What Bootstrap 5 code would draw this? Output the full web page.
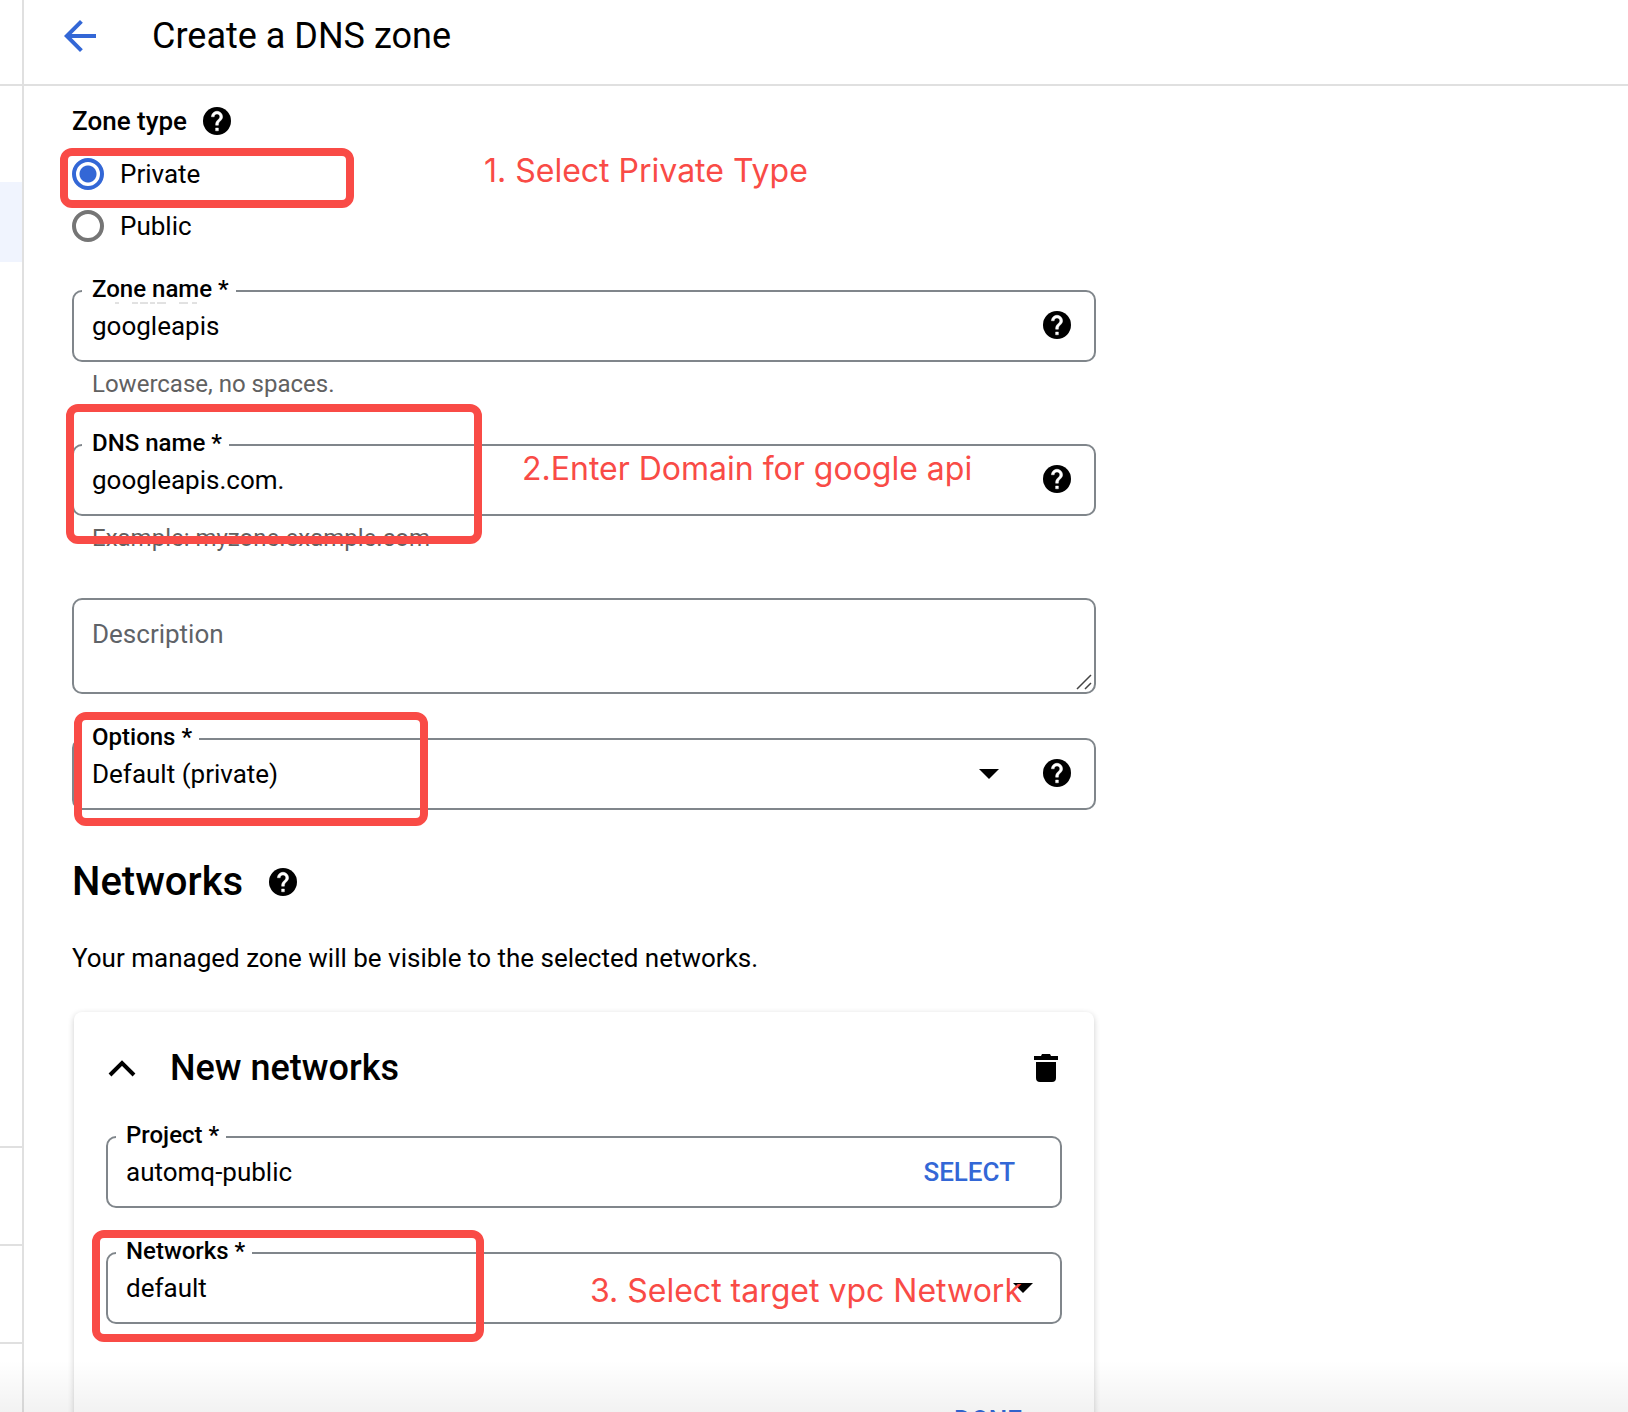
<!DOCTYPE html>
<html lang="en">
<head>
<meta charset="utf-8">
<meta name="viewport" content="width=device-width, initial-scale=1">
<title>Create a DNS zone</title>
<link href="https://cdn.jsdelivr.net/npm/bootstrap@5.3.0/dist/css/bootstrap.min.css" rel="stylesheet">
<style>
  body { font-family: Roboto, "Liberation Sans", sans-serif; font-size: 26px; line-height: 30px; color: #000; background: #fff; }
  .shell::after { content: ""; position: absolute; left: 0; right: 0; bottom: 0; height: 52px; pointer-events: none; background: linear-gradient(rgba(0,0,0,0), rgba(0,0,0,.05)); }
  .side-rail { width: 24px; border-right: 2px solid #e0e0e0; }
  .rail-head { height: 86px; border-bottom: 2px solid #e0e0e0; }
  .rail-active { height: 80px; margin-top: 96px; background: #f0f4fe; }
  .rail-item { height: 98px; border-top: 2px solid #e0e0e0; }
  .topbar { height: 86px; padding: 0 40px 12px; gap: 56px; border-bottom: 2px solid #e0e0e0; }
  .page-title { font-size: 36px; line-height: 42px; font-weight: 400; }
  .page-body { padding: 20px 48px 0; }
  .zone-form { max-width: 1024px; }
  .group-title { font-size: 26px; line-height: 30px; font-weight: 500; }
  .type-list { margin-top: 22px; gap: 20px; }
  .type-item { height: 32px; gap: 16px; }
  .type-item input { appearance: none; width: 32px; height: 32px; margin: 0; border: 4px solid #757575; border-radius: 50%; background: #fff; }
  .type-item input:checked { border-color: #3367d6; background: radial-gradient(circle, #3367d6 8px, #fff 9px); }
  .outlined { position: relative; height: 72px; padding: 0 23px 0 18px; border: 2px solid #80868b; border-radius: 10px; }
  .outlined.tall { height: 96px; padding: 0; }
  .outlined > label { position: absolute; left: 8px; top: -17px; padding: 0 7px 0 10px; font-size: 24px; line-height: 28px; font-weight: 500; background: #fff; }
  .outlined input, .outlined select, .outlined textarea { flex: 1 1 0; min-width: 0; padding: 0; border: 0; outline: 0; background: transparent; color: #000; appearance: none; line-height: 30px; }
  .outlined textarea { width: 100%; height: 92px; padding: 19px 18px; resize: none; display: block; }
  .outlined textarea::placeholder { color: #5f6368; opacity: 1; }
  .outlined .help-mark { margin-bottom: 2px; }
  .grip { position: absolute; right: 2px; bottom: 2px; }
  .hint { margin-top: 8px; padding-left: 20px; font-size: 24px; line-height: 28px; color: #616161; }
  .first-field { margin-top: 48px; }
  .next-field { margin-top: 46px; }
  .near-field { margin-top: 44px; }
  .caret-gap { margin-right: 44px; }
  .caret-end { margin-right: 4px; }
  .section-title { font-size: 40px; line-height: 48px; font-weight: 500; }
  .section-row { margin-top: 48px; gap: 26px; }
  .section-text { margin-top: 37px; }
  .net-card { margin: 39px 2px 0; padding: 35px 32px 32px; border-radius: 8px; box-shadow: 0 2px 6px rgba(0,0,0,.2); }
  .net-title { font-size: 36px; line-height: 42px; font-weight: 500; }
  .net-toggle { gap: 34px; padding-left: 2px !important; }
  .net-first { margin-top: 47px; }
  .plain-btn { padding: 0; border: 0; background: transparent; color: inherit; }
  .link-btn { font-weight: 500; color: #3367d6; }
  .callout-box { position: absolute; border: 8px solid #f94b46; border-radius: 12px; pointer-events: none; }
  .callout-note { position: absolute; font-family: Inter, "Liberation Sans", sans-serif; font-size: 32px; line-height: 38px; color: #f94b46; white-space: nowrap; pointer-events: none; }
  .box-type { left: -12px; top: -10px; width: 294px; height: 60px; }
  .note-type { left: 412px; top: -6px; }
  .box-dns { left: -6px; top: -40px; width: 416px; height: 140px; }
  .note-dns { left: 450px; top: 6px; }
  .box-options { left: 0; top: -28px; width: 354px; height: 114px; }
  .box-net { left: -16px; top: -24px; width: 392px; height: 112px; }
  .note-net { left: 482px; top: 18px; }
  .done-row { margin-top: 81px; padding-right: 40px; }
  .select-btn { margin-right: 22px; }
  .stale-line { position: absolute; left: 34px; top: 10px; }
</style>
<script src="https://cdn.jsdelivr.net/npm/bootstrap@5.3.0/dist/js/bootstrap.bundle.min.js"></script>
</head>
<body>
<svg class="d-none" aria-hidden="true">
  <symbol id="i-help" viewBox="2 2 20 20"><circle cx="12" cy="12" r="10"/><path fill="#fff" stroke="#fff" stroke-width=".3" d="M13 19h-2v-2h2v2zm2.07-7.75-.9.92C13.45 12.9 13 13.5 13 15h-2v-.5c0-1.100.45-2.100 1.170-2.830l1.240-1.260c.37-.36.59-.86.59-1.410 0-1.100-.9-2-2-2s-2 .9-2 2H8c0-2.210 1.790-4 4-4s4 1.790 4 4c0 .88-.36 1.680-.93 2.250z"/></symbol>
</svg>
<div class="shell d-flex vh-100 overflow-hidden position-relative">
  <aside class="side-rail d-flex flex-column flex-shrink-0">
    <div class="rail-head flex-shrink-0"></div>
    <div class="rail-active flex-shrink-0"></div>
    <div class="mt-auto">
      <div class="rail-item"></div>
      <div class="rail-item"></div>
      <div class="rail-item" style="height:70px"></div>
    </div>
  </aside>
  <div class="flex-grow-1">
    <header class="topbar d-flex align-items-center">
      <button type="button" class="plain-btn d-flex" aria-label="Back">
        <svg width="32" height="32" viewBox="4 4 16 16" fill="#3367d6"><path d="M20 11H7.830l5.590-5.590L12 4l-8 8 8 8 1.410-1.410L7.830 13H20v-2z"/></svg>
      </button>
      <h1 class="page-title mb-0">Create a DNS zone</h1>
    </header>
    <main class="page-body">
      <form class="zone-form">
        <div class="d-flex align-items-center gap-3">
          <h2 class="group-title mb-0">Zone type</h2>
          <svg width="28" height="28"><use href="#i-help"/></svg>
        </div>
        <div class="type-list d-flex flex-column">
          <div class="type-item d-flex align-items-center position-relative">
            <input type="radio" name="ztype" id="t-private" checked><label for="t-private">Private</label>
            <div class="callout-box box-type"></div>
            <div class="callout-note note-type">1. Select Private Type</div>
          </div>
          <div class="type-item d-flex align-items-center">
            <input type="radio" name="ztype" id="t-public"><label for="t-public">Public</label>
          </div>
        </div>

        <div class="first-field">
          <div class="outlined d-flex align-items-center">
            <label for="zname">Zone name *</label>
            <svg class="stale-line" width="90" height="2"><path d="M7 1h4M24 1h6M32 1h8M42 1h5M49 1h9M71 1h9M84 1h5" stroke="#c4c4c4" stroke-width="1"/></svg>
            <input type="text" id="zname" value="googleapis">
            <svg class="help-mark" width="28" height="28"><use href="#i-help"/></svg>
          </div>
          <div class="hint">Lowercase, no spaces.</div>
        </div>

        <div class="next-field">
          <div class="position-relative">
            <div class="outlined d-flex align-items-center">
              <label for="dname">DNS name *</label>
              <input type="text" id="dname" value="googleapis.com.">
              <svg class="help-mark" width="28" height="28"><use href="#i-help"/></svg>
            </div>
            <div class="hint">Example: myzone.example.com</div>
            <div class="callout-box box-dns"></div>
            <div class="callout-note note-dns">2.Enter Domain for google api</div>
          </div>
        </div>

        <div class="next-field">
          <div class="outlined tall">
            <textarea id="desc" aria-label="Description" placeholder="Description"></textarea>
            <svg class="grip" width="16" height="16" stroke="#444" stroke-width="1.500"><path d="M1 15 15 1M9 15l6-6"/></svg>
          </div>
        </div>

        <div class="near-field">
          <div class="outlined d-flex align-items-center">
            <label for="opts">Options *</label>
            <select id="opts"><option>Default (private)</option></select>
            <svg class="caret-gap" width="20" height="10"><path d="M0 0h20L10 10z"/></svg>
            <svg class="help-mark" width="28" height="28"><use href="#i-help"/></svg>
            <div class="callout-box box-options"></div>
          </div>
        </div>

        <div class="section-row d-flex align-items-center">
          <h2 class="section-title mb-0">Networks</h2>
          <svg width="28" height="28"><use href="#i-help"/></svg>
        </div>
        <p class="section-text mb-0">Your managed zone will be visible to the selected networks.</p>

        <section class="net-card">
          <div class="d-flex align-items-center justify-content-between">
            <button type="button" class="plain-btn net-toggle d-flex align-items-center">
              <svg width="28" height="18" fill="none" stroke="#000" stroke-width="4"><path d="M2 16 14 4l12 12"/></svg>
              <span class="net-title">New networks</span>
            </button>
            <button type="button" class="plain-btn d-flex me-1" aria-label="Delete">
              <svg width="24" height="28"><path d="M0 2h7l1-2h8l1 2h7v4H0zM2 8h20v16a4 4 0 0 1-4 4H6a4 4 0 0 1-4-4z"/></svg>
            </button>
          </div>
          <div class="outlined net-first d-flex align-items-center">
            <label for="proj">Project *</label>
            <input type="text" id="proj" value="automq-public">
            <button type="button" class="plain-btn link-btn select-btn">SELECT</button>
          </div>
          <div class="outlined near-field d-flex align-items-center">
            <label for="nets">Networks *</label>
            <select id="nets"><option>default</option></select>
            <svg class="caret-end" width="20" height="10"><path d="M0 0h20L10 10z"/></svg>
            <div class="callout-box box-net"></div>
            <div class="callout-note note-net">3. Select target vpc Network</div>
          </div>
          <div class="done-row d-flex justify-content-end">
            <button type="button" class="plain-btn link-btn">DONE</button>
          </div>
        </section>
      </form>
    </main>
  </div>
</div>
</body>
</html>
